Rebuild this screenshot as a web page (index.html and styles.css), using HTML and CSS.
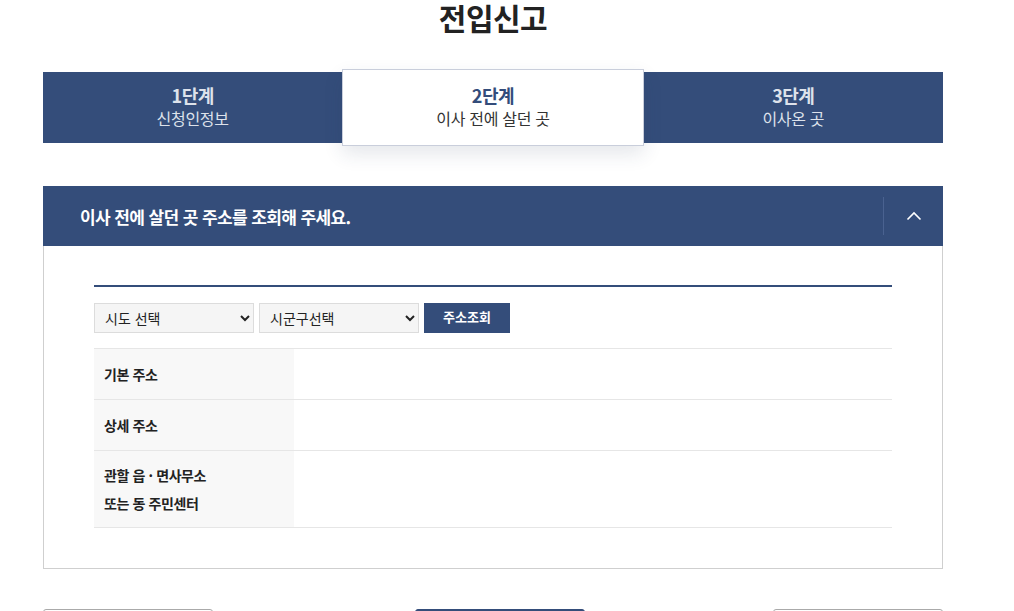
FILE: index.html
```html
<!DOCTYPE html>
<html lang="ko">
<head>
<meta charset="utf-8">
<title>전입신고</title>
<link rel="stylesheet" href="styles.css">
</head>
<body>
<div class="wrap">
  <h1 class="title">전입신고</h1>
  <ol class="steps">
    <li class="step"><strong>1단계</strong><span>신청인정보</span></li>
    <li class="step active"><strong>2단계</strong><span>이사 전에 살던 곳</span></li>
    <li class="step"><strong>3단계</strong><span>이사온 곳</span></li>
  </ol>

  <section class="panel">
    <header class="panel-head">
      <h2>이사 전에 살던 곳 주소를 조회해 주세요.</h2>
      <button class="toggle" type="button" aria-label="접기">
        <svg width="16" height="10" viewBox="0 0 16 10"><polyline points="1.5,8.5 8,2 14.5,8.5" fill="none" stroke="#fff" stroke-width="1.6"/></svg>
      </button>
    </header>
    <div class="panel-body">
      <div class="search">
        <select class="sel"><option>시도 선택</option></select>
        <select class="sel"><option>시군구선택</option></select>
        <button class="btn-search" type="button">주소조회</button>
      </div>
      <table class="info">
        <tr><th>기본 주소</th><td></td></tr>
        <tr><th>상세 주소</th><td></td></tr>
        <tr class="tall"><th>관할 읍 · 면사무소<br>또는 동 주민센터</th><td></td></tr>
      </table>
    </div>
  </section>

  <div class="actions">
    <button class="btn outline" type="button">이전</button>
    <button class="btn primary" type="button">다음</button>
    <button class="btn outline" type="button">취소</button>
  </div>
</div>
</body>
</html>
```

FILE: styles.css
```css
* { box-sizing: border-box; }
html, body { margin: 0; padding: 0; background: #fff; }
body {
  font-family: "Noto Sans CJK KR", "Noto Sans", sans-serif;
  color: #222;
  overflow: hidden;
}
.wrap {
  width: 900px;
  margin-left: 43px;
}
.title {
  margin: 0;
  height: 72px;
  padding-top: 0;
  text-align: center;
  font-size: 30px;
  font-weight: 700;
  line-height: 34px;
  color: #222;
  letter-spacing: -0.5px;
}
.steps {
  list-style: none;
  margin: 0;
  padding: 0;
  display: flex;
  height: 71px;
  background: #344d7a;
}
.step {
  flex: 1 1 0;
  display: flex;
  flex-direction: column;
  align-items: center;
  justify-content: center;
  color: #dde2eb;
  padding-bottom: 4px;
}
.step strong {
  font-size: 18px;
  font-weight: 700;
  line-height: 24px;
  letter-spacing: -0.5px;
}
.step span {
  font-size: 16px;
  line-height: 22px;
  letter-spacing: -0.3px;
}
.step.active {
  margin: -3px 0;
  background: #fff;
  border: 1px solid #c9cedb;
  box-shadow: 0 8px 18px rgba(40, 55, 90, 0.12);
  position: relative;
  z-index: 1;
  color: #333;
}
.step.active strong { color: #334c7a; }

.panel {
  margin-top: 43px;
}
.panel-head {
  height: 60px;
  background: #344d7a;
  display: flex;
  align-items: center;
  justify-content: space-between;
}
.panel-head h2 {
  margin: 0 0 0 37px;
  font-size: 17px;
  font-weight: 700;
  color: #fff;
  letter-spacing: -0.6px;
}
.toggle {
  width: 60px;
  height: 38px;
  border: 0;
  border-left: 1px solid #4a6290;
  background: transparent;
  display: flex;
  align-items: center;
  justify-content: center;
  padding: 0;
  cursor: pointer;
}
.panel-body {
  border: 1px solid #cfcfcf;
  border-top: 0;
  padding: 39px 50px 40px;
}
.search {
  border-top: 2px solid #344d7a;
  padding-top: 16px;
  display: flex;
  gap: 5px;
}
.sel {
  width: 160px;
  height: 30px;
  border: 1px solid #dcdcdc;
  background: #f5f5f5;
  font-family: inherit;
  font-size: 14px;
  color: #222;
  padding: 0 6px;
}
.btn-search {
  width: 86px;
  height: 30px;
  border: 0;
  background: #344d7a;
  color: #fff;
  font-family: inherit;
  font-size: 13px;
  font-weight: 700;
  padding: 0 0 4px;
}
.info {
  margin-top: 15px;
  width: 100%;
  border-collapse: collapse;
  border-top: 1px solid #e6e6e6;
}
.info tr { height: 51px; border-bottom: 1px solid #e6e6e6; }
.info tr.tall { height: 77px; }
.info th {
  width: 200px;
  background: #f8f8f8;
  text-align: left;
  font-size: 14px;
  font-weight: 700;
  padding: 0 10px;
  line-height: 28px;
  letter-spacing: -0.4px;
  color: #222;
}
.info td { background: #fff; }

.actions {
  margin-top: 40px;
  display: flex;
  justify-content: space-between;
}
.btn {
  width: 170px;
  height: 50px;
  border-radius: 3px;
  font-family: inherit;
  font-size: 16px;
}
.btn.outline { background: #fff; border: 1px solid #aaa; color: #333; }
.btn.primary { background: #344d7a; border: 1px solid #344d7a; color: #fff; margin-left: 14px; }
```
